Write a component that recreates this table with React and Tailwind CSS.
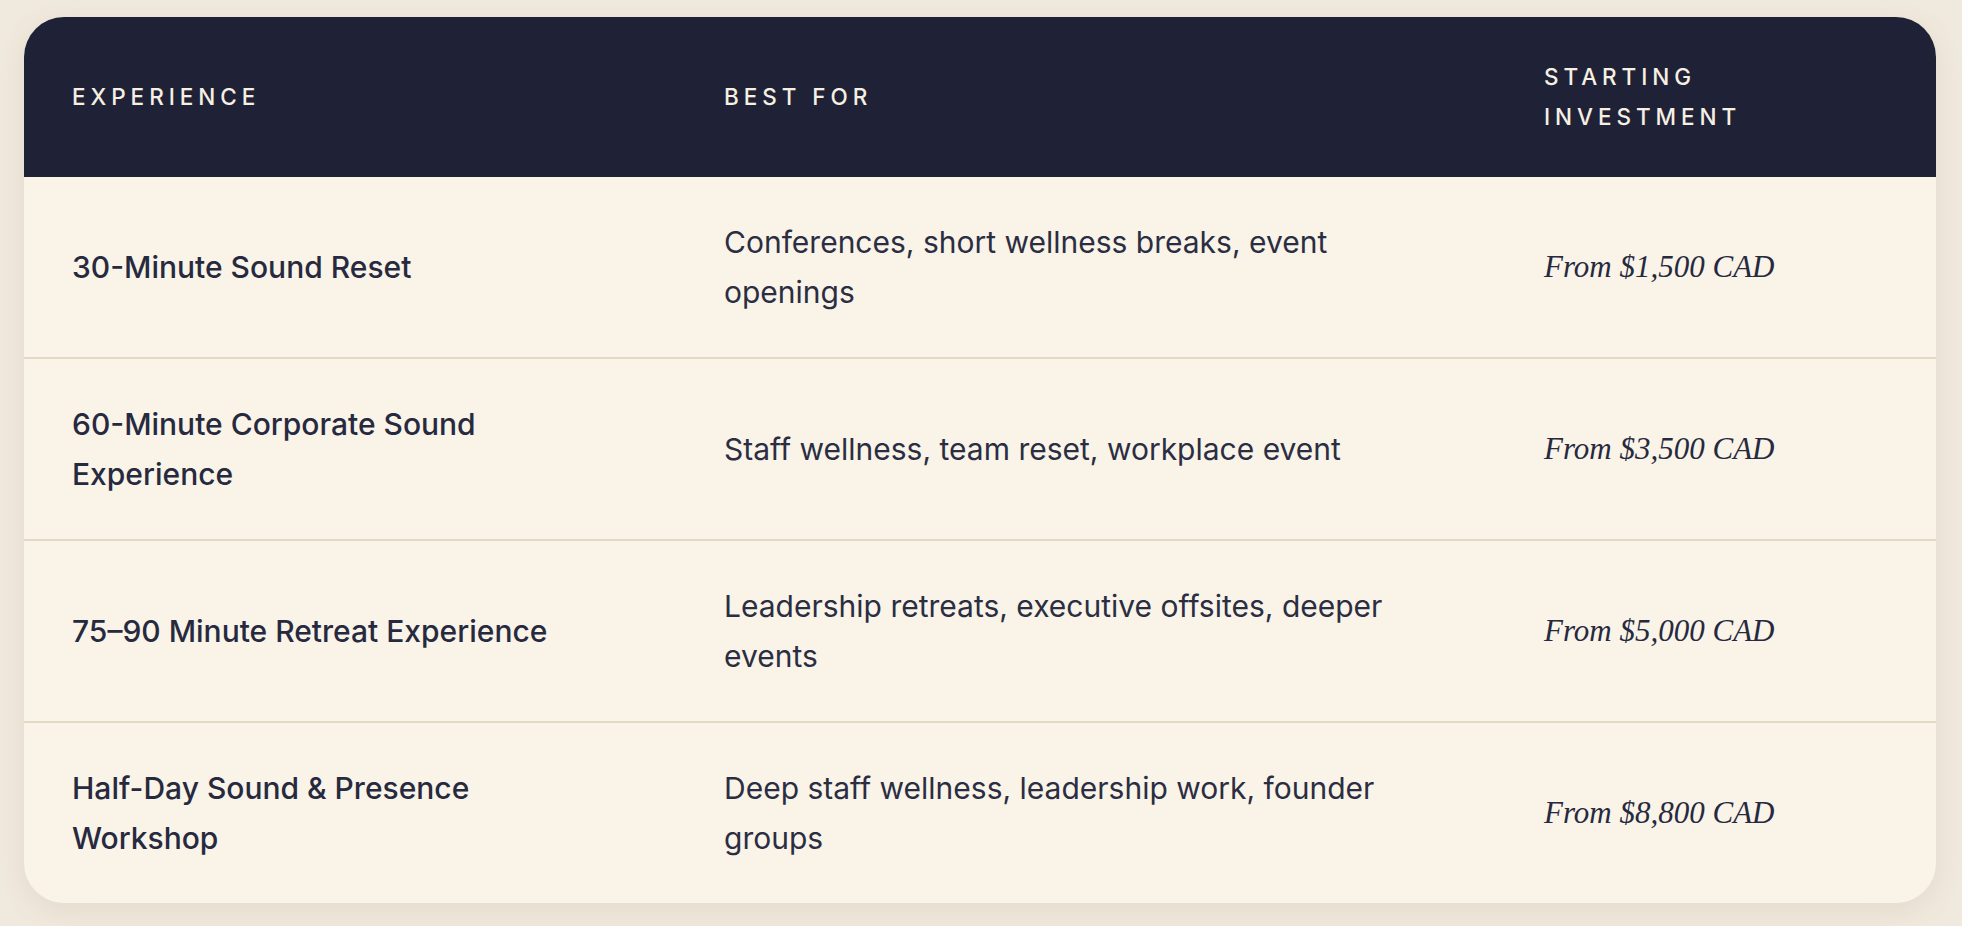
import React from "react";

const rows = [
  {
    title: "30-Minute Sound Reset",
    best: "Conferences, short wellness breaks, event openings",
    price: "From $1,500 CAD",
  },
  {
    title: "60-Minute Corporate Sound Experience",
    best: "Staff wellness, team reset, workplace event",
    price: "From $3,500 CAD",
  },
  {
    title: "75–90 Minute Retreat Experience",
    best: "Leadership retreats, executive offsites, deeper events",
    price: "From $5,000 CAD",
  },
  {
    title: "Half-Day Sound & Presence Workshop",
    best: "Deep staff wellness, leadership work, founder groups",
    price: "From $8,800 CAD",
  },
];

const sans = { fontFamily: "Inter, 'Noto Sans', sans-serif" };
const serif = { fontFamily: "'Liberation Serif', 'DejaVu Serif', serif" };

export default function App() {
  return (
    <div
      className="min-h-screen bg-[#f0e9dd] pt-[17px] pb-[23px] pl-[24px] pr-[26px]"
      style={sans}
    >
      <div className="overflow-hidden rounded-[40px] bg-[#f9f3e8] shadow-[0_8px_30px_rgba(120,100,60,0.10)]">
        <div className="grid grid-cols-[652px_820px_1fr] bg-[#1f2237] text-[#f6efe2]">
          {["Experience", "Best For", "Starting Investment"].map((h) => (
            <div
              key={h}
              className="flex items-center px-12 py-10 text-[22.5px] font-medium uppercase leading-[40px] tracking-[0.22em]"
            >
              {h}
            </div>
          ))}
        </div>
        {rows.map((r, i) => (
          <div
            key={r.title}
            className={`grid grid-cols-[652px_820px_1fr] text-[#272a3e] ${
              i > 0 ? "border-t-2 border-[#e2d9c5]" : ""
            }`}
          >
            <div className="flex items-center py-10 pl-12 pr-14 text-[30px] font-medium leading-[50px]">
              {r.title}
            </div>
            <div className="flex items-center px-12 py-10 text-[30px] leading-[50px] text-[#2b2e42]">
              {r.best}
            </div>
            <div
              className="flex items-center px-12 py-10 text-[31px] italic leading-[50px]"
              style={serif}
            >
              {r.price}
            </div>
          </div>
        ))}
      </div>
    </div>
  );
}
